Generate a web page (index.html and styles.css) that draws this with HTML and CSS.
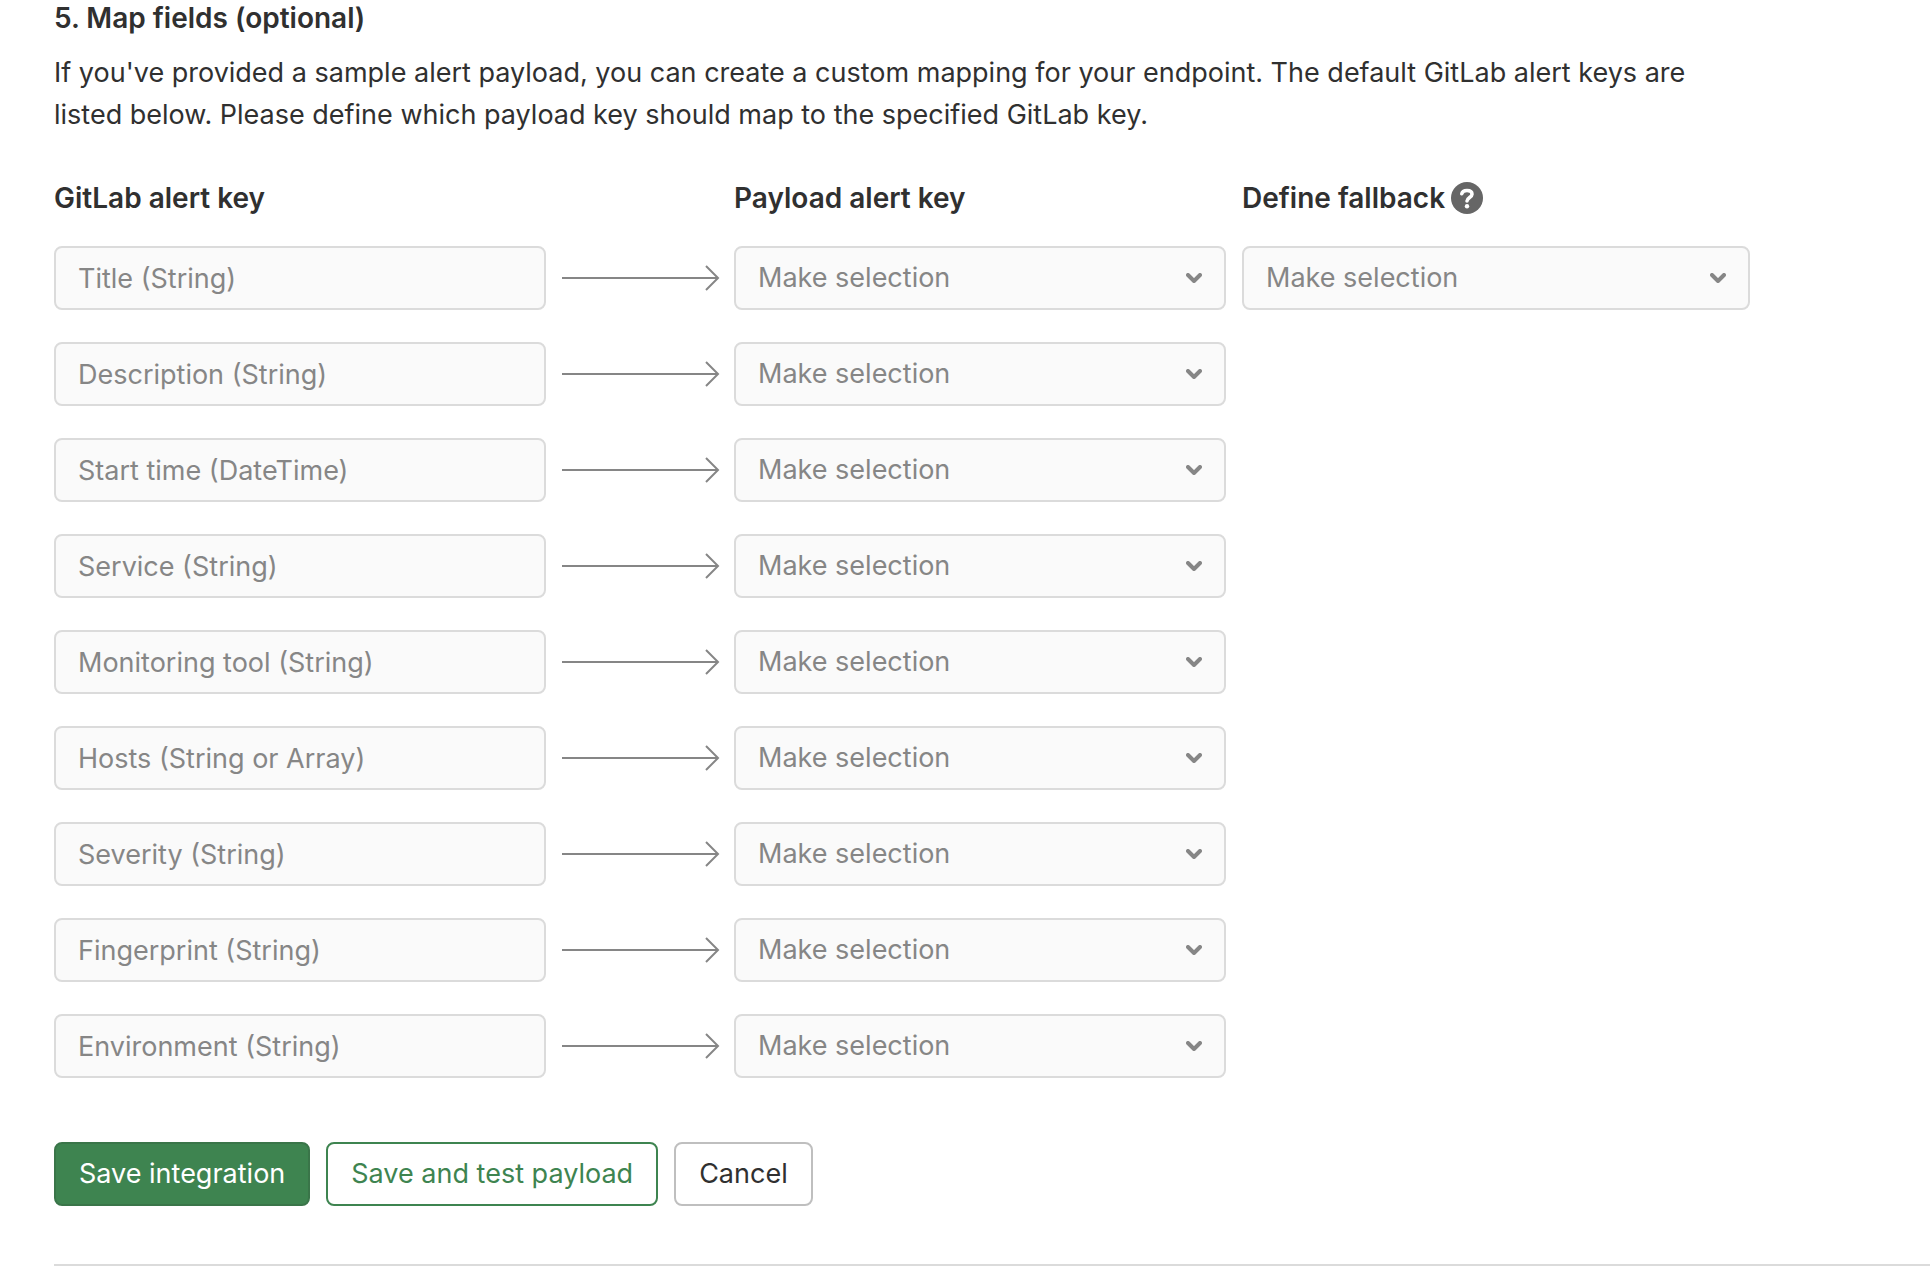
FILE: index.html
```html
<!DOCTYPE html>
<html lang="en">
<head>
<meta charset="utf-8">
<meta name="viewport" content="width=device-width, initial-scale=1">
<title>Alert integration</title>
<link rel="stylesheet" href="styles.css">
</head>
<body>
<svg class="sprite" aria-hidden="true">
  <symbol id="chevron" viewBox="0 0 16 10"><path d="M2 2l6 6 6-6" fill="none" stroke="currentColor" stroke-width="4" stroke-linecap="round" stroke-linejoin="round"/></symbol>
  <symbol id="head" viewBox="0 0 14 26" overflow="visible"><path d="M0 1l12 12L0 25" fill="none" stroke="currentColor" stroke-width="2"/></symbol>
</svg>
<main>
  <form class="settings">
    <h2 class="title">5. Map fields (optional)</h2>
    <p class="intro">If you've provided a sample alert payload, you can create a custom mapping for your endpoint. The default GitLab alert keys are listed below. Please define which payload key should map to the specified GitLab key.</p>

    <div class="mapping">
      <div class="row">
        <h3 class="column-title key">GitLab alert key</h3>
        <h3 class="column-title payload">Payload alert key</h3>
        <h3 class="column-title fallback">Define fallback
          <svg class="help" viewBox="0 0 32 32" role="img" aria-label="Help"><circle cx="16" cy="16" r="16" fill="#666"/><path d="M10.800 11.800C11.200 9.600 13.100 8.500 16 8.500c3 0 5 1.400 5 3.700 0 3.200-5 3.300-5 6.800" fill="none" stroke="#fff" stroke-width="3.600" stroke-linecap="round"/><circle cx="16" cy="24.200" r="2.200" fill="#fff"/></svg>
        </h3>
      </div>
      <div class="row">
        <input class="field" type="text" aria-label="GitLab alert key" value="Title (String)" disabled>
        <svg class="arrow" aria-hidden="true"><line x1="0" y1="13" x2="100%" y2="13"/><svg x="100%" overflow="visible"><use href="#head" x="-12" width="14" height="26"/></svg></svg>
        <div class="dropdown"><select class="field" aria-label="Payload key for title" disabled><option>Make selection</option></select><svg class="chevron"><use href="#chevron"/></svg></div>
        <div class="dropdown"><select class="field" aria-label="Fallback for title" disabled><option>Make selection</option></select><svg class="chevron"><use href="#chevron"/></svg></div>
      </div>
      <div class="row">
        <input class="field" type="text" aria-label="GitLab alert key" value="Description (String)" disabled>
        <svg class="arrow" aria-hidden="true"><line x1="0" y1="13" x2="100%" y2="13"/><svg x="100%" overflow="visible"><use href="#head" x="-12" width="14" height="26"/></svg></svg>
        <div class="dropdown"><select class="field" aria-label="Payload key for description" disabled><option>Make selection</option></select><svg class="chevron"><use href="#chevron"/></svg></div>
      </div>
      <div class="row">
        <input class="field" type="text" aria-label="GitLab alert key" value="Start time (DateTime)" disabled>
        <svg class="arrow" aria-hidden="true"><line x1="0" y1="13" x2="100%" y2="13"/><svg x="100%" overflow="visible"><use href="#head" x="-12" width="14" height="26"/></svg></svg>
        <div class="dropdown"><select class="field" aria-label="Payload key for start time" disabled><option>Make selection</option></select><svg class="chevron"><use href="#chevron"/></svg></div>
      </div>
      <div class="row">
        <input class="field" type="text" aria-label="GitLab alert key" value="Service (String)" disabled>
        <svg class="arrow" aria-hidden="true"><line x1="0" y1="13" x2="100%" y2="13"/><svg x="100%" overflow="visible"><use href="#head" x="-12" width="14" height="26"/></svg></svg>
        <div class="dropdown"><select class="field" aria-label="Payload key for service" disabled><option>Make selection</option></select><svg class="chevron"><use href="#chevron"/></svg></div>
      </div>
      <div class="row">
        <input class="field" type="text" aria-label="GitLab alert key" value="Monitoring tool (String)" disabled>
        <svg class="arrow" aria-hidden="true"><line x1="0" y1="13" x2="100%" y2="13"/><svg x="100%" overflow="visible"><use href="#head" x="-12" width="14" height="26"/></svg></svg>
        <div class="dropdown"><select class="field" aria-label="Payload key for monitoring tool" disabled><option>Make selection</option></select><svg class="chevron"><use href="#chevron"/></svg></div>
      </div>
      <div class="row">
        <input class="field" type="text" aria-label="GitLab alert key" value="Hosts (String or Array)" disabled>
        <svg class="arrow" aria-hidden="true"><line x1="0" y1="13" x2="100%" y2="13"/><svg x="100%" overflow="visible"><use href="#head" x="-12" width="14" height="26"/></svg></svg>
        <div class="dropdown"><select class="field" aria-label="Payload key for hosts" disabled><option>Make selection</option></select><svg class="chevron"><use href="#chevron"/></svg></div>
      </div>
      <div class="row">
        <input class="field" type="text" aria-label="GitLab alert key" value="Severity (String)" disabled>
        <svg class="arrow" aria-hidden="true"><line x1="0" y1="13" x2="100%" y2="13"/><svg x="100%" overflow="visible"><use href="#head" x="-12" width="14" height="26"/></svg></svg>
        <div class="dropdown"><select class="field" aria-label="Payload key for severity" disabled><option>Make selection</option></select><svg class="chevron"><use href="#chevron"/></svg></div>
      </div>
      <div class="row">
        <input class="field" type="text" aria-label="GitLab alert key" value="Fingerprint (String)" disabled>
        <svg class="arrow" aria-hidden="true"><line x1="0" y1="13" x2="100%" y2="13"/><svg x="100%" overflow="visible"><use href="#head" x="-12" width="14" height="26"/></svg></svg>
        <div class="dropdown"><select class="field" aria-label="Payload key for fingerprint" disabled><option>Make selection</option></select><svg class="chevron"><use href="#chevron"/></svg></div>
      </div>
      <div class="row">
        <input class="field" type="text" aria-label="GitLab alert key" value="Environment (String)" disabled>
        <svg class="arrow" aria-hidden="true"><line x1="0" y1="13" x2="100%" y2="13"/><svg x="100%" overflow="visible"><use href="#head" x="-12" width="14" height="26"/></svg></svg>
        <div class="dropdown"><select class="field" aria-label="Payload key for environment" disabled><option>Make selection</option></select><svg class="chevron"><use href="#chevron"/></svg></div>
      </div>
    </div>

    <div class="actions">
      <button class="button primary" type="submit">Save integration</button>
      <button class="button secondary" type="button">Save and test payload</button>
      <button class="button" type="reset">Cancel</button>
    </div>
  </form>
  <hr class="divider">
</main>
</body>
</html>
```
FILE: styles.css
```css
*, *::before, *::after {
  box-sizing: border-box;
}

body {
  margin: 0;
  background: #fff;
  color: #303030;
  font: 27px/42px Inter, "Liberation Sans", sans-serif;
}

.sprite {
  display: none;
}

.settings {
  padding: 0 180px 58px 54px;
}

.title,
.column-title {
  margin: 0;
  font-size: 28px;
  font-weight: 600;
  line-height: 36px;
}

.intro {
  margin: 16px 0 46px;
}

.mapping {
  display: flex;
  flex-direction: column;
  gap: 32px;
}

.row {
  display: grid;
  grid-template-columns: 492fr 156fr 492fr 508fr;
  column-gap: 16px;
  align-items: center;
}

.column-title {
  display: flex;
  align-items: center;
  gap: 6px;
  line-height: 32px;
}

.payload {
  grid-column: 3;
}

.help {
  width: 32px;
  height: 32px;
}

.field {
  display: block;
  width: 100%;
  min-width: 0;
  height: 64px;
  margin: 0;
  padding: 0 22px;
  border: 2px solid #dbdbdb;
  border-radius: 8px;
  background: #fafafa;
  color: #868686;
  font: inherit;
  opacity: 1;
  appearance: none;
}

.dropdown {
  display: grid;
  align-items: center;
}

.dropdown > * {
  grid-area: 1 / 1;
}

.chevron {
  width: 16px;
  height: 10px;
  margin-right: 24px;
  justify-self: end;
  color: #868686;
  pointer-events: none;
}

.arrow {
  width: 100%;
  height: 26px;
  overflow: visible;
  color: #868686;
  stroke: #868686;
  stroke-width: 2px;
}

.actions {
  display: flex;
  gap: 16px;
  margin-top: 64px;
}

.button {
  height: 64px;
  padding: 0 23px;
  border: 2px solid #bfbfbf;
  border-radius: 8px;
  background: #fff;
  color: #303030;
  font: inherit;
}

.secondary {
  border-color: #3e8450;
  color: #3e8450;
}

.primary {
  border-color: #3a7549;
  background: #3e8450;
  color: #fff;
}

.divider {
  margin: 0 0 0 54px;
  border: 0;
  border-top: 2px solid #dbdbdb;
}
```
